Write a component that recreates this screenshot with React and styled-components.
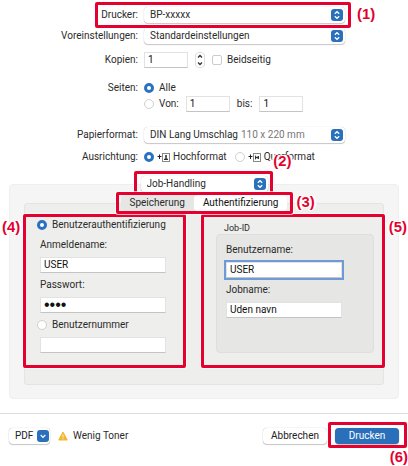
import React, { useState } from "react";
import styled, { createGlobalStyle } from "styled-components";

const Callout = ({ n, box, at }) => (
  <Mark $box={box}>
    <MarkNumber $at={at}>({n})</MarkNumber>
  </Mark>
);

const Arrows = () => (
  <ArrowBadge viewBox="0 0 12 12" aria-hidden="true">
    <rect width="12" height="12" rx="3" fill="#2a70bb" />
    <path d="M3.8 4.8 L6 2.7 L8.2 4.8 M3.8 7.2 L6 9.3 L8.2 7.2" />
  </ArrowBadge>
);

const Popup = ({ id, label, value, detail }) => (
  <PopupBox>
    <PopupSelect id={id} aria-label={label} $fit={Boolean(detail)}>
      <option>{value}</option>
    </PopupSelect>
    {detail && <PopupDetail>{detail}</PopupDetail>}
    <Arrows />
  </PopupBox>
);

const OrientationIcon = ({ landscape }) => (
  <PageIcon viewBox="0 0 13 11" aria-hidden="true">
    <path d="M2.5 2.5 V7 M0.5 4.5 H4.5" stroke="#222" fill="none" />
    <rect x="5.5" y="1.5" width="7" height="8" fill="#fff" stroke="#888" />
    {landscape ? (
      <path d="M7 3 V8 L8.5 6 H9.5 V7 H11 V4 H9.5 V5 H8.5 Z" fill="#333" />
    ) : (
      <path d="M8.2 3 H9.8 V5 L9.6 6.2 L11 7 V8 H7 V7 L8.4 6.2 L8.2 5 Z" fill="#333" />
    )}
  </PageIcon>
);

const App = () => {
  const [pages, setPages] = useState("all");
  const [orientation, setOrientation] = useState("portrait");
  const [auth, setAuth] = useState("login");
  const [tab, setTab] = useState("auth");

  return (
    <>
      <GlobalStyle />
      <Dialog>
        <Form>
          <Row $top={7}>
            <RowLabel htmlFor="printer">Drucker:</RowLabel>
            <Popup id="printer" value="BP-xxxxx" />
            <Callout n={1} box="-5px -6px -5px 95px" at="1px auto auto calc(100% + 9px)" />
          </Row>
          <Row $top={5}>
            <RowLabel htmlFor="preset">Voreinstellungen:</RowLabel>
            <Popup id="preset" value="Standardeinstellungen" />
          </Row>
          <Row $top={8}>
            <RowLabel htmlFor="copies">Kopien:</RowLabel>
            <Controls $gap={7}>
              <NumberInput id="copies" defaultValue="1" />
              <Stepper viewBox="0 0 10 16" aria-hidden="true">
                <rect x="0.5" y="0.5" width="9" height="15" rx="3" fill="#fff" stroke="#ddd" />
                <path d="M3 5.5 L5 3.5 L7 5.5 M3 10.5 L5 12.5 L7 10.5" />
              </Stepper>
              <Choice>
                <Check type="checkbox" />
                Beidseitig
              </Choice>
            </Controls>
          </Row>
          <Row $top={12}>
            <RowLabel as="span">Seiten:</RowLabel>
            <Choice>
              <Radio name="pages" checked={pages === "all"} onChange={() => setPages("all")} />
              Alle
            </Choice>
          </Row>
          <Row>
            <span />
            <Controls $gap={7}>
              <Choice>
                <Radio name="pages" checked={pages === "range"} onChange={() => setPages("range")} />
                Von:
              </Choice>
              <NumberInput aria-label="Von" defaultValue="1" />
              <Choice htmlFor="to">bis:</Choice>
              <NumberInput id="to" defaultValue="1" />
            </Controls>
          </Row>
          <Row $top={15}>
            <RowLabel htmlFor="paper">Papierformat:</RowLabel>
            <Popup id="paper" value="DIN Lang Umschlag" detail="110 x 220 mm" />
          </Row>
          <Row $top={6}>
            <RowLabel as="span">Ausrichtung:</RowLabel>
            <Controls $gap={8}>
              <Choice $gap={3}>
                <Radio
                  name="orientation"
                  checked={orientation === "portrait"}
                  onChange={() => setOrientation("portrait")}
                />
                <OrientationIcon />
                Hochformat
              </Choice>
              <Choice $gap={3}>
                <Radio
                  name="orientation"
                  checked={orientation === "landscape"}
                  onChange={() => setOrientation("landscape")}
                />
                <OrientationIcon landscape />
                Querformat
              </Choice>
            </Controls>
          </Row>
        </Form>

        <Section>
          <SectionPicker>
            <Popup label="Bereich" value="Job-Handling" />
            <Callout n={2} box="-5px -5px -3px -7px" at="-21px -22px auto auto" />
          </SectionPicker>
          <SectionPanel>
            <TabPanel>
              <Tabs role="tablist">
                <Tab role="tab" aria-selected={tab === "store"} onClick={() => setTab("store")}>
                  Speicherung
                </Tab>
                <Tab role="tab" aria-selected={tab === "auth"} onClick={() => setTab("auth")}>
                  Authentifizierung
                </Tab>
                <Callout n={3} box="-3px -6px -3px -5px" at="-1px auto auto calc(100% + 6px)" />
              </Tabs>
              <Columns>
                <Login>
                  <Choice>
                    <Radio name="auth" checked={auth === "login"} onChange={() => setAuth("login")} />
                    Benutzerauthentifizierung
                  </Choice>
                  <Field>
                    Anmeldename:
                    <TextInput defaultValue="USER" />
                  </Field>
                  <Field>
                    Passwort:
                    <PasswordInput type="password" defaultValue="user" />
                  </Field>
                  <Choice>
                    <Radio name="auth" checked={auth === "number"} onChange={() => setAuth("number")} />
                    Benutzernummer
                  </Choice>
                  <NumberField>
                    <TextInput aria-label="Benutzernummer" />
                  </NumberField>
                  <Callout n={4} box="0 -1px 0 -2px" at="2px auto auto -24px" />
                </Login>
                <JobId>
                  <JobTitle>Job-ID</JobTitle>
                  <JobBox>
                    <Field>
                      Benutzername:
                      <TextInput $focused defaultValue="USER" />
                    </Field>
                    <Field>
                      Jobname:
                      <TextInput defaultValue="Uden navn" />
                    </Field>
                  </JobBox>
                  <Callout n={5} box="0 -2px 0 0" at="2px -25px auto auto" />
                </JobId>
              </Columns>
            </TabPanel>
          </SectionPanel>
        </Section>

        <Footer>
          <PdfButton>
            PDF
            <ArrowBadge viewBox="0 0 12 12" aria-hidden="true">
              <rect width="12" height="12" rx="3" fill="#2a70bb" />
              <path d="M3.7 5 L6 7.3 L8.3 5" />
            </ArrowBadge>
          </PdfButton>
          <Warning>
            <WarningIcon viewBox="0 0 10 10" aria-hidden="true">
              <path d="M5 1 L9.3 9 H0.7 Z" fill="#f5b731" stroke="#f5b731" strokeLinejoin="round" />
              <path d="M5 3.5 V6.3 M5 7.2 V8.2" stroke="#fff3d0" />
            </WarningIcon>
            Wenig Toner
          </Warning>
          <Button>Abbrechen</Button>
          <PrintSlot>
            <Button $primary>Drucken</Button>
            <Callout n={6} box="-6px -8px -4px -7px" at="calc(100% + 4px) -4px auto auto" />
          </PrintSlot>
        </Footer>
      </Dialog>
    </>
  );
};

export default App;

const GlobalStyle = createGlobalStyle`
  * {
    box-sizing: border-box;
  }
  body {
    margin: 0;
    background: #fff;
    color: #2b2b2b;
    font-family: Roboto, "Liberation Sans", sans-serif;
    font-size: 10px;
    line-height: 16px;
  }
  input,
  select,
  button {
    margin: 0;
    color: inherit;
    font: inherit;
  }
`;

const Dialog = styled.main`
  overflow: hidden;
  padding-bottom: 22px;
`;

const Form = styled.div`
  display: flex;
  flex-direction: column;
`;

const Row = styled.div`
  position: relative;
  display: grid;
  grid-template-columns: 138px 1fr;
  gap: 6px;
  align-items: center;
  height: 16px;
  margin: ${({ $top = 0 }) => $top}px 63px 0 0;
`;

const RowLabel = styled.label`
  text-align: right;
  white-space: nowrap;
`;

const Controls = styled.div`
  display: flex;
  align-items: center;
  gap: ${({ $gap }) => $gap}px;
`;

const Choice = styled.label`
  display: flex;
  align-items: center;
  gap: ${({ $gap = 5 }) => $gap}px;
  white-space: nowrap;
`;

const Radio = styled.input.attrs({ type: "radio" })`
  appearance: none;
  flex: none;
  width: 10px;
  height: 10px;
  border: 1px solid #d0d0d0;
  border-radius: 50%;
  background: #fff;
  &:checked {
    border: 3px solid #2a72bf;
  }
`;

const Check = styled.input`
  appearance: none;
  width: 10px;
  height: 10px;
  border: 1px solid #ccc;
  border-radius: 2px;
  background: #fff;
`;

const PopupBox = styled.div`
  display: flex;
  align-items: center;
  width: 100%;
  height: 16px;
  padding: 0 2px 0 6px;
  border-radius: 4px;
  background: #fff;
  box-shadow: 0 0 1px rgba(0, 0, 0, 0.3), 0 1px 1px rgba(0, 0, 0, 0.2);
`;

const PopupSelect = styled.select`
  appearance: none;
  flex: ${({ $fit }) => ($fit ? "none" : "1")};
  min-width: 0;
  field-sizing: content;
  padding: 0;
  border: none;
  outline: none;
  background: transparent;
`;

const PopupDetail = styled.span`
  flex: 1;
  padding-left: 3px;
  color: #777;
  white-space: nowrap;
`;

const ArrowBadge = styled.svg`
  flex: none;
  width: 12px;
  height: 12px;
  path {
    fill: none;
    stroke: #fff;
    stroke-width: 1.2;
  }
`;

const Stepper = styled.svg`
  width: 10px;
  height: 16px;
  path {
    fill: none;
    stroke: #333;
    stroke-width: 1.3;
  }
`;

const PageIcon = styled.svg`
  flex: none;
  width: 13px;
  height: 11px;
`;

const TextInput = styled.input`
  display: block;
  width: 100%;
  height: 16px;
  padding: 0 3px;
  border: 1px solid #e2e2e2;
  border-bottom-color: #c4c4c4;
  outline: ${({ $focused }) => ($focused ? "2px solid #6f9ad6" : "none")};
  background: #fff;
  color: #111;
`;

const NumberInput = styled(TextInput)`
  width: 44px;
`;

const PasswordInput = styled(TextInput)`
  font-family: "Liberation Sans", sans-serif;
  font-size: 16px;
`;

const Section = styled.section`
  display: flex;
  flex-direction: column;
  align-items: center;
  margin: 11px 9px 0;
`;

const SectionPicker = styled.div`
  position: relative;
  z-index: 2;
  width: 127px;
`;

const SectionPanel = styled.div`
  width: 100%;
  margin-top: -8px;
  padding: 18px 14px 13px;
  border: 1px solid #efefef;
  border-radius: 4px;
  background: #f5f5f5;
`;

const TabPanel = styled.div`
  display: flex;
  flex-direction: column;
  align-items: center;
  padding-bottom: 16px;
  border: 1px solid #e4e4e2;
  border-radius: 3px;
  background: #eeeeec;
`;

const Tabs = styled.div`
  position: relative;
  z-index: 3;
  display: flex;
  height: 16px;
  margin-top: -9px;
  border-radius: 4px;
  background: #e6e6e5;
`;

const Tab = styled.button`
  padding: 0 9px;
  border: none;
  border-radius: 4px;
  background: transparent;
  white-space: nowrap;
  &[aria-selected="true"] {
    background: #fff;
    color: #111;
  }
`;

const Columns = styled.div`
  display: grid;
  grid-template-columns: 160px 1fr;
  gap: 16px;
  width: 100%;
  margin-top: 3px;
`;

const Login = styled.div`
  position: relative;
  padding: 3px 19px 15px 12px;
`;

const Field = styled.label`
  display: flex;
  flex-direction: column;
  gap: 4px;
  margin-bottom: 4px;
  ${Login} & {
    margin: 4px 0 4px 3px;
  }
`;

const NumberField = styled.div`
  margin: 4px 0 0 3px;
`;

const JobId = styled.div`
  position: relative;
  display: flex;
  flex-direction: column;
  padding: 8px 9px 15px 15px;
`;

const JobTitle = styled.span`
  padding-left: 8px;
  font-size: 9px;
  line-height: 12px;
`;

const JobBox = styled.div`
  flex: 1;
  padding: 7px 31px 0 9px;
  border: 1px solid #dededc;
  border-radius: 4px;
  background: #e6e6e4;
`;

const Footer = styled.footer`
  display: flex;
  align-items: center;
  gap: 8px;
  margin-top: 14px;
  padding: 14px 9px 0;
  border-top: 1px solid #ddd;
`;

const Button = styled.button`
  width: 64px;
  height: 16px;
  padding: 0;
  border: none;
  border-radius: 4px;
  background: ${({ $primary }) => ($primary ? "#2a6fba" : "#fff")};
  color: ${({ $primary }) => ($primary ? "#fff" : "#222")};
  box-shadow: 0 0 1px rgba(0, 0, 0, 0.35), 0 1px 1px rgba(0, 0, 0, 0.2);
`;

const PdfButton = styled(Button)`
  display: flex;
  align-items: center;
  justify-content: space-between;
  width: 41px;
  padding: 0 1px 0 6px;
`;

const Warning = styled.span`
  display: flex;
  flex: 1;
  align-items: center;
  gap: 5px;
  white-space: nowrap;
`;

const WarningIcon = styled.svg`
  width: 10px;
  height: 10px;
`;

const PrintSlot = styled.div`
  position: relative;
  display: flex;
`;

const Mark = styled.div`
  position: absolute;
  z-index: 1;
  inset: ${({ $box }) => $box};
  border: 3px solid #e4002f;
  border-radius: 2px;
  box-shadow: 0 0 0 1px rgba(255, 255, 255, 0.7);
  pointer-events: none;
`;

const MarkNumber = styled.span`
  position: absolute;
  inset: ${({ $at }) => $at};
  color: #e4002f;
  font: bold 15px/16px "Liberation Sans", Arial, sans-serif;
  text-shadow: 1px 0 1px #fff, -1px 0 1px #fff, 0 1px 1px #fff, 0 -1px 1px #fff,
    2px 0 1px #fff, -2px 0 1px #fff;
`;
